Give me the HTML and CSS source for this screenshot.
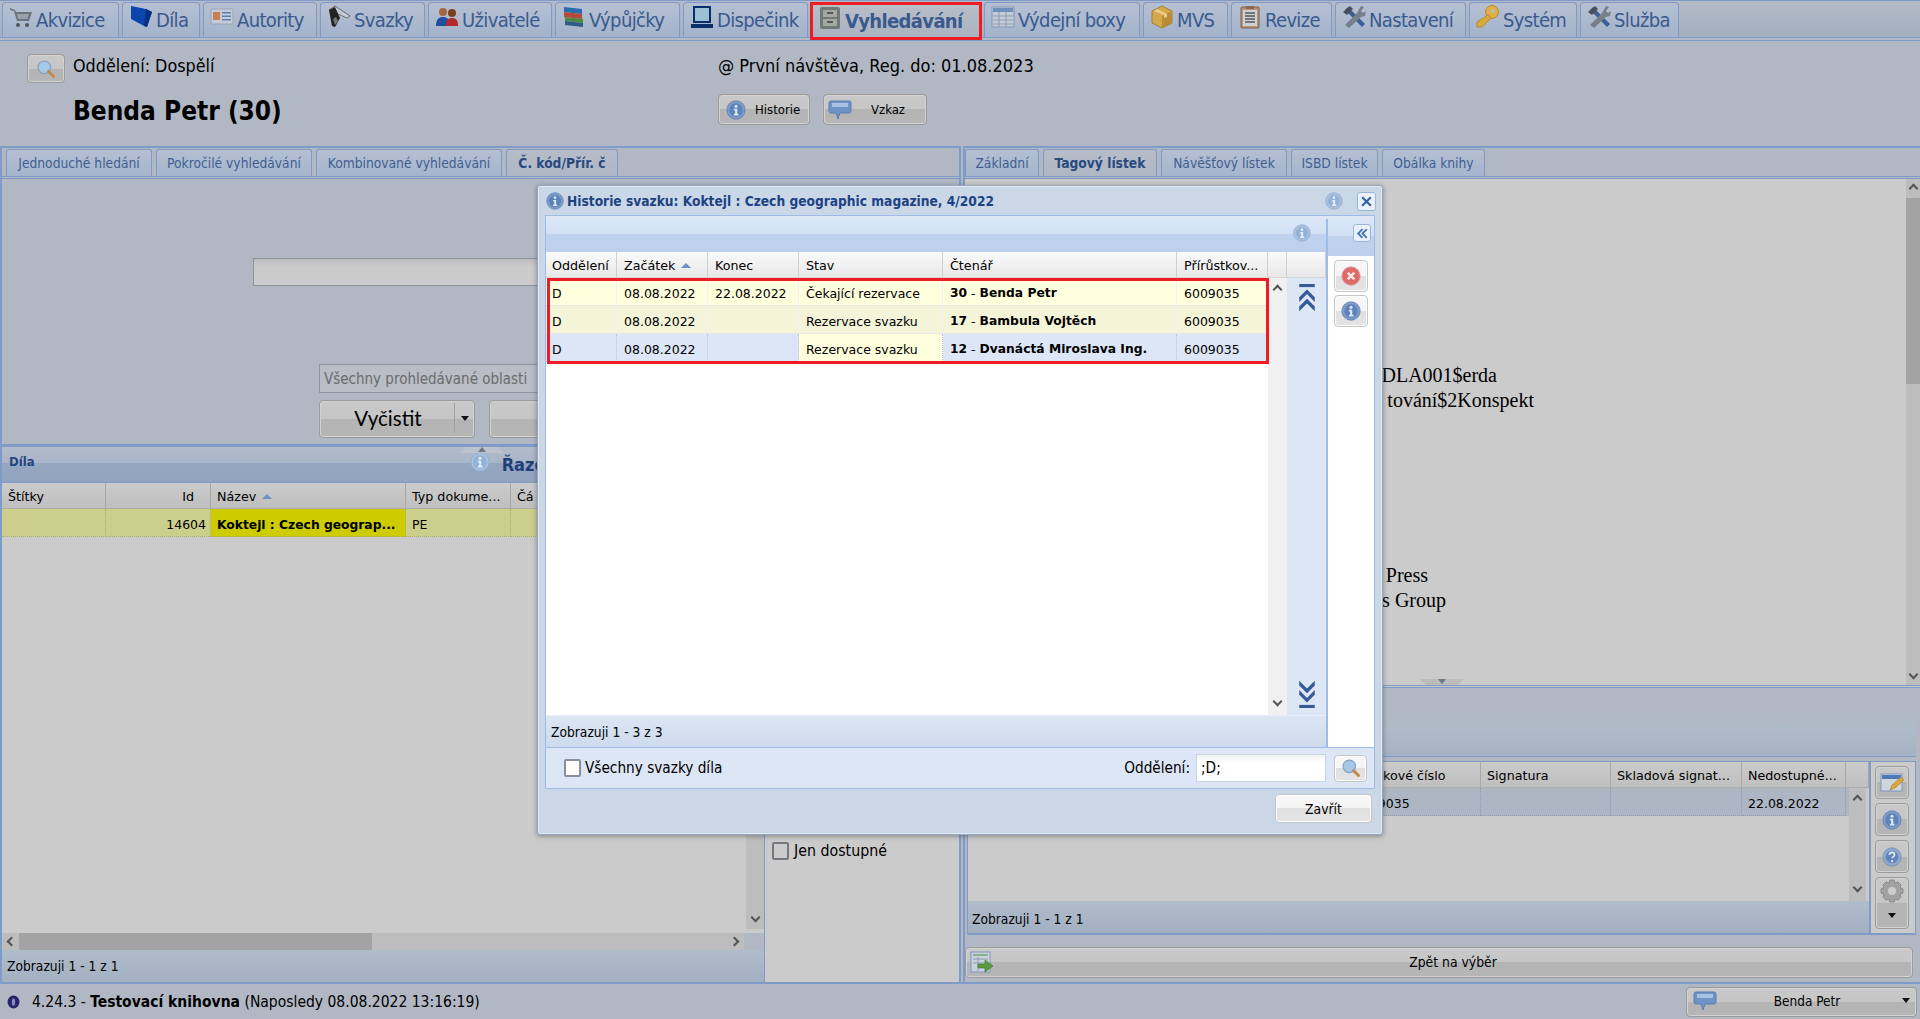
FILE: index.html
```html
<!DOCTYPE html>
<html lang="cs">
<head>
<meta charset="utf-8">
<title>Vyhledávání</title>
<link rel="stylesheet" href="styles.css">
</head>
<body>
<svg class="sprite" aria-hidden="true">
  <symbol id="i-info" viewBox="0 0 24 24"><circle cx="12" cy="12" r="11" fill="#7e9cc6" stroke="#5f82b4"/><circle cx="12" cy="12" r="8" fill="#5c83ba"/><circle cx="12" cy="7.5" r="1.8" fill="#dfe8f4"/><path d="M9.5 10.5h4v6h1.5v2H9.5v-2H11v-4H9.500z" fill="#dfe8f4"/></symbol>
  <symbol id="i-info-pale" viewBox="0 0 24 24"><circle cx="12" cy="12" r="11" fill="#a9c1dc" stroke="#8eaccf"/><circle cx="12" cy="12" r="8" fill="#93b2d5"/><circle cx="12" cy="7.500" r="1.800" fill="#e4edf7"/><path d="M9.500 10.500h4v6h1.500v2H9.500v-2H11v-4H9.500z" fill="#e4edf7"/></symbol>
  <symbol id="i-cart" viewBox="0 0 24 24"><path d="M1 3l5 2 1 2h16l-3 9H8L5 6 1 5z" fill="#6c737d"/><path d="M8 9h12l-1.500 5H9z" fill="#9aa1ab"/><circle cx="9" cy="20" r="2" fill="#555"/><circle cx="18" cy="20" r="2" fill="#555"/></symbol>
  <symbol id="i-book" viewBox="0 0 24 24"><path d="M2 1l15 3 6 3-5 15-3-1L2 14z" fill="#0c45ad"/><path d="M17 4l6 3-5 15-3-1z" fill="#06307f"/></symbol>
  <symbol id="i-card" viewBox="0 0 24 24"><rect x="1" y="4" width="22" height="15" rx="1" fill="#c4ccd8" stroke="#9aa4b3"/><rect x="3" y="7" width="7" height="8" fill="#c97d52"/><path d="M12 7h9v1.500h-9zM12 10.500h9V12h-9zM12 14h9v1.500h-9z" fill="#5d7fb0"/></symbol>
  <symbol id="i-pen" viewBox="0 0 24 24"><path d="M2 5L8 1l15 10-3 2z" fill="#c5cbd4" stroke="#555" stroke-width=".8"/><path d="M2 5l6-3 5 11-5 9-3-1z" fill="#222"/><path d="M6 14l3-2 2 4-3 4z" fill="#777"/></symbol>
  <symbol id="i-people" viewBox="0 0 24 24"><circle cx="8" cy="7" r="4" fill="#a5673a"/><circle cx="17" cy="8" r="4" fill="#7b3f1c"/><path d="M1 21c0-7 3-9 7-9s7 2 7 9z" fill="#1f4f9e"/><path d="M11 21c0-6 2-8 6-8s6 2 6 8z" fill="#b22a2a"/></symbol>
  <symbol id="i-books" viewBox="0 0 24 24"><path d="M2 2l18 2v5L2 7z" fill="#2b6bb0"/><path d="M2 7l18 2v5L2 12z" fill="#b44a3a"/><path d="M3 12l18 2v4L3 16z" fill="#4c8a43"/><path d="M3 16l18 2v4L3 20z" fill="#2d5d86"/></symbol>
  <symbol id="i-monitor" viewBox="0 0 24 24"><rect x="3" y="1" width="18" height="17" fill="#0a2e66"/><rect x="5" y="3" width="14" height="13" fill="#9cc1d5"/><rect x="1" y="19" width="22" height="4" fill="#0a2e66"/></symbol>
  <symbol id="i-cab" viewBox="0 0 24 24"><rect x="2" y="1" width="20" height="22" rx="2" fill="#6f7a76"/><rect x="5" y="4" width="14" height="7" fill="#a4aaa3"/><rect x="5" y="13" width="14" height="7" fill="#a4aaa3"/><rect x="9" y="6" width="6" height="2" fill="#555"/><rect x="9" y="15" width="6" height="2" fill="#555"/></symbol>
  <symbol id="i-grid" viewBox="0 0 24 24"><rect x="1" y="2" width="22" height="20" fill="#c4ccd8" stroke="#7f97bd"/><rect x="2" y="3" width="20" height="4" fill="#6f8fbd"/><path d="M2 11h20M2 15h20M2 19h20M8 7v15M15 7v15" stroke="#8f9bab"/></symbol>
  <symbol id="i-box" viewBox="0 0 24 24"><path d="M12 1l10 5v12l-10 5-10-5V6z" fill="#d4a94e" stroke="#a47f33"/><path d="M12 11l10-5v12l-10 5z" fill="#b88b34"/><path d="M7 4l10 5v3l-3 1V10L4 6z" fill="#ecd08c"/></symbol>
  <symbol id="i-clip" viewBox="0 0 24 24"><rect x="3" y="2" width="18" height="21" rx="1" fill="#b99478" stroke="#7f5f49"/><rect x="5" y="5" width="14" height="16" fill="#ccd1d8"/><path d="M7 8h10M7 11h10M7 14h10M7 17h10" stroke="#555" stroke-width="1.300"/><rect x="8" y="1" width="8" height="3" fill="#8a6a52"/></symbol>
  <symbol id="i-tools" viewBox="0 0 24 24"><path d="M3 5l3-3 17 17-3 3z" fill="#3a5f96"/><path d="M19 1l3 1-3 4 2 2 3-2-1 5-4 1L7 23l-4-3L15 8z" fill="#777f89"/><path d="M1 7l7-6 3 3-6 6z" fill="#4a4f57"/></symbol>
  <symbol id="i-key" viewBox="0 0 24 24"><circle cx="16" cy="7" r="6.500" fill="#deb04c" stroke="#b98a2c"/><circle cx="17" cy="6" r="1.800" fill="#b3bdcd"/><path d="M12 10l3 3L6 22H1v-5z" fill="#d9a93f" stroke="#b98a2c"/></symbol>
  <symbol id="i-lens" viewBox="0 0 24 24"><circle cx="10" cy="10" r="7.500" fill="#a8c8e8" stroke="#85a3c6" stroke-width="1.500"/><path d="M15 15l6 6" stroke="#c28a4c" stroke-width="3.500" stroke-linecap="round"/></symbol>
  <symbol id="i-bubble" viewBox="0 0 24 24"><path d="M3 3h18a2 2 0 012 2v8a2 2 0 01-2 2h-9l-2 6-2-6H3a2 2 0 01-2-2V5a2 2 0 012-2z" fill="#6f93c6" stroke="#5d7fb0"/><path d="M4 5h16v4H4z" fill="#a8c2e2"/></symbol>
  <symbol id="i-close" viewBox="0 0 24 24"><circle cx="12" cy="12" r="11" fill="#e06a6a" stroke="#d8a0a0"/><path d="M8 8l8 8M16 8l-8 8" stroke="#fbe4e4" stroke-width="3"/></symbol>
  <symbol id="i-help" viewBox="0 0 24 24"><circle cx="12" cy="12" r="11" fill="#8ea7cc" stroke="#7290bb"/><circle cx="12" cy="12" r="7.500" fill="#5f83ba"/><path d="M9 9.500a3 3 0 116 0c0 2-3 2-3 4" fill="none" stroke="#e4ecf6" stroke-width="2"/><circle cx="12" cy="17" r="1.300" fill="#e4ecf6"/></symbol>
  <symbol id="i-gear" viewBox="0 0 24 24"><path d="M10 1h4l1 3 3-1 3 3-1 3 3 1v4l-3 1 1 3-3 3-3-1-1 3h-4l-1-3-3 1-3-3 1-3-3-1v-4l3-1-1-3 3-3 3 1z" fill="#a2a2a2" stroke="#8a8a8a"/><circle cx="12" cy="12" r="4" fill="#cdcdcd"/></symbol>
  <symbol id="i-edit" viewBox="0 0 24 24"><rect x="1" y="3" width="21" height="17" fill="#cfd6df" stroke="#7f97bd"/><rect x="2" y="4" width="19" height="4" fill="#4f79b5"/><path d="M10 19l2-5 9-8 3 3-9 8z" fill="#dba53f" stroke="#a67a27" stroke-width=".6"/></symbol>
  <symbol id="i-export" viewBox="0 0 24 24"><rect x="1" y="1" width="19" height="20" fill="#c8d2e0" stroke="#7f97bd"/><path d="M3 4h15" stroke="#74a86a" stroke-width="1.500"/><path d="M3 8h15M3 12h15M8 6v14" stroke="#8f9bab"/><path d="M8 13h7V9l8 6-8 6v-4H8z" fill="#5b9a3f" stroke="#3d7428" stroke-width=".6"/></symbol>
  <symbol id="i-top" viewBox="0 0 24 36"><path d="M2 0h20v4H2z" fill="#355c98"/><path d="M12 7l10 10v6L12 13 2 23v-6z" fill="#355c98"/><path d="M12 19l10 10v6L12 25 2 35v-6z" fill="#355c98"/></symbol>
  <symbol id="i-bottom" viewBox="0 0 24 36"><path d="M2 36h20v-4H2z" fill="#355c98"/><path d="M12 29l10-10v-6L12 23 2 13v6z" fill="#355c98"/><path d="M12 17L22 7V1L12 11 2 1v6z" fill="#355c98"/></symbol>
  <symbol id="i-orb" viewBox="0 0 24 24"><ellipse cx="12" cy="12" rx="11" ry="12" fill="#25256a"/><ellipse cx="12" cy="12" rx="3" ry="7" fill="#8f8ac4"/></symbol>
</svg>

<nav class="topnav">
  <a class="tab"><svg class="tab-ico"><use href="#i-cart"/></svg>Akvizice</a>
  <a class="tab"><svg class="tab-ico"><use href="#i-book"/></svg>Díla</a>
  <a class="tab"><svg class="tab-ico"><use href="#i-card"/></svg>Autority</a>
  <a class="tab"><svg class="tab-ico"><use href="#i-pen"/></svg>Svazky</a>
  <a class="tab"><svg class="tab-ico"><use href="#i-people"/></svg>Uživatelé</a>
  <a class="tab"><svg class="tab-ico"><use href="#i-books"/></svg>Výpůjčky</a>
  <a class="tab"><svg class="tab-ico"><use href="#i-monitor"/></svg>Dispečink</a>
  <a class="tab tab-on"><svg class="tab-ico"><use href="#i-cab"/></svg>Vyhledávání</a>
  <a class="tab"><svg class="tab-ico"><use href="#i-grid"/></svg>Výdejní boxy</a>
  <a class="tab"><svg class="tab-ico"><use href="#i-box"/></svg>MVS</a>
  <a class="tab"><svg class="tab-ico"><use href="#i-clip"/></svg>Revize</a>
  <a class="tab"><svg class="tab-ico"><use href="#i-tools"/></svg>Nastavení</a>
  <a class="tab"><svg class="tab-ico"><use href="#i-key"/></svg>Systém</a>
  <a class="tab"><svg class="tab-ico"><use href="#i-tools"/></svg>Služba</a>
</nav>

<header class="user">
  <div class="user-left">
    <div class="user-dept">
      <button class="btn btn-lens"><svg class="ico-20"><use href="#i-lens"/></svg></button>
      <span class="user-dept-t">Oddělení: Dospělí</span>
    </div>
    <h1 class="user-name">Benda Petr (30)</h1>
  </div>
  <div class="user-right">
    <div class="user-visit">@ První návštěva, Reg. do: 01.08.2023</div>
    <div class="user-btns">
      <button class="btn btn-hist"><svg class="ico-20"><use href="#i-info"/></svg><span>Historie</span></button>
      <button class="btn btn-msg"><svg class="ico-24"><use href="#i-bubble"/></svg><span>Vzkaz</span></button>
    </div>
  </div>
</header>

<main class="work">
  <section class="col-left">
    <div class="subtabs subtabs-left">
      <a class="subtab">Jednoduché hledání</a>
      <a class="subtab">Pokročilé vyhledávání</a>
      <a class="subtab">Kombinované vyhledávání</a>
      <a class="subtab subtab-on">Č. kód/Přír. č</a>
    </div>
    <div class="search">
      <div class="field-wide"></div>
      <div class="field-area">Všechny prohledávané oblasti</div>
      <div class="search-btns">
        <button class="btn btn-big btn-clear"><span class="btn-clear-t">Vyčistit</span><span class="split"><i class="caret"></i></span></button>
        <button class="btn btn-big btn-next">Hledat</button>
      </div>
    </div>
    <div class="results">
      <div class="res-head">
        <span class="splitter"><i class="tri-up"></i></span>
        <span class="res-title">Díla</span>
        <svg class="res-info"><use href="#i-info-pale"/></svg>
        <span class="res-sort">Řazení</span>
      </div>
      <div class="res-body">
        <div class="res-main">
          <div class="res-grid">
            <div class="g-row g-head cols-works">
              <div class="g-c">Štítky</div><div class="g-c g-r">Id</div><div class="g-c">Název <i class="sort"></i></div><div class="g-c">Typ dokume...</div><div class="g-c">Čá</div>
            </div>
            <div class="g-row g-sel cols-works">
              <div class="g-c"></div><div class="g-c g-r">14604</div><div class="g-c g-hi">Koktejl : Czech geograp...</div><div class="g-c">PE</div><div class="g-c"></div>
            </div>
            <div class="vbar-end"><i class="chev chev-d"></i></div>
          </div>
          <div class="hbar"><i class="chev chev-l"></i><span class="hthumb"></span><i class="chev chev-r"></i></div>
          <div class="g-status">Zobrazuji 1 - 1 z 1</div>
        </div>
        <aside class="res-side">
          <label class="chk-row"><i class="chk chk-dim"></i>Jen dostupné</label>
        </aside>
      </div>
    </div>
  </section>

  <section class="col-right">
    <div class="subtabs subtabs-right">
      <a class="subtab">Základní</a>
      <a class="subtab subtab-on">Tagový lístek</a>
      <a class="subtab">Návěšťový lístek</a>
      <a class="subtab">ISBD lístek</a>
      <a class="subtab">Obálka knihy</a>
    </div>
    <div class="record">
      <div class="record-text">
        <p class="rec-a">DLA001$erda</p>
        <p class="rec-b">tování$2Konspekt</p>
        <p class="rec-c">Press</p>
        <p class="rec-d">s Group</p>
      </div>
      <div class="vscroll"><i class="chev chev-u"></i><span class="vthumb"></span><i class="chev chev-d vs-down"></i></div>
      <span class="splitter2"><i class="tri-down"></i></span>
    </div>
    <div class="copies-head"></div>
    <div class="copies">
      <div class="copies-main">
        <div class="copies-grid">
          <div class="g-row g-head cols-copies">
            <div class="g-c"></div><div class="g-c">Přírůstkové číslo</div><div class="g-c">Signatura</div><div class="g-c">Skladová signat...</div><div class="g-c">Nedostupné...</div><div class="g-c"></div>
          </div>
          <div class="g-row g-cur cols-copies">
            <div class="g-c"></div><div class="g-c">6009035</div><div class="g-c"></div><div class="g-c"></div><div class="g-c">22.08.2022</div>
          </div>
          <div class="copies-scroll"><i class="chev chev-u"></i><i class="chev chev-d"></i></div>
        </div>
        <div class="g-status copies-status">Zobrazuji 1 - 1 z 1</div>
      </div>
      <div class="copies-tools">
        <button class="btn tool"><svg class="ico-24"><use href="#i-edit"/></svg></button>
        <button class="btn tool"><svg class="ico-20"><use href="#i-info"/></svg></button>
        <button class="btn tool"><svg class="ico-20"><use href="#i-help"/></svg></button>
        <button class="btn tool tool-tall"><svg class="ico-24"><use href="#i-gear"/></svg><i class="caret"></i></button>
      </div>
    </div>
    <button class="btn btn-back"><svg class="ico-24 back-ico"><use href="#i-export"/></svg>Zpět na výběr</button>
  </section>
</main>

<footer class="statusbar">
  <svg class="orb"><use href="#i-orb"/></svg>
  <span class="ver">4.24.3 - <b>Testovací knihovna</b> (Naposledy 08.08.2022 13:16:19)</span>
  <button class="btn btn-user"><svg class="ico-24"><use href="#i-bubble"/></svg><span class="btn-user-t">Benda Petr</span><i class="caret"></i></button>
</footer>

<div class="modal">
  <div class="m-title">
    <svg class="ico-18"><use href="#i-info"/></svg>
    <span class="m-title-t">Historie svazku: Koktejl : Czech geographic magazine, 4/2022</span>
    <svg class="ico-18 m-title-info"><use href="#i-info-pale"/></svg>
    <button class="m-x"><svg viewBox="0 0 12 12"><path d="M2 2l8 8M10 2l-8 8" stroke="#36609f" stroke-width="2"/></svg></button>
  </div>
  <div class="m-frame">
    <div class="m-body">
      <div class="m-main">
        <div class="m-strip"><svg class="ico-18"><use href="#i-info-pale"/></svg></div>
        <div class="m-gridwrap">
          <div class="m-grid">
            <div class="g-row g-mhead cols-hist">
              <div class="g-c">Oddělení</div><div class="g-c">Začátek <i class="sort"></i></div><div class="g-c">Konec</div><div class="g-c">Stav</div><div class="g-c">Čtenář</div><div class="g-c">Přírůstkov...</div><div class="g-c"></div><div class="g-c"></div>
            </div>
            <div class="m-rows">
              <div class="m-table">
                <div class="g-row m-row m-row1 cols-data">
                  <div class="g-c">D</div><div class="g-c">08.08.2022</div><div class="g-c">22.08.2022</div><div class="g-c">Čekající rezervace</div><div class="g-c"><b>30</b> - <b>Benda Petr</b></div><div class="g-c">6009035</div>
                </div>
                <div class="g-row m-row m-row2 cols-data">
                  <div class="g-c">D</div><div class="g-c">08.08.2022</div><div class="g-c"></div><div class="g-c">Rezervace svazku</div><div class="g-c"><b>17</b> - <b>Bambula Vojtěch</b></div><div class="g-c">6009035</div>
                </div>
                <div class="g-row m-row m-row3 cols-data">
                  <div class="g-c">D</div><div class="g-c">08.08.2022</div><div class="g-c"></div><div class="g-c g-y">Rezervace svazku</div><div class="g-c"><b>12</b> - <b>Dvanáctá Miroslava Ing.</b></div><div class="g-c">6009035</div>
                </div>
                <div class="m-redbox"></div>
              </div>
              <div class="m-scroll"><i class="chev chev-u"></i><i class="chev chev-d"></i></div>
              <div class="m-jump"><svg class="jump"><use href="#i-top"/></svg><svg class="jump"><use href="#i-bottom"/></svg></div>
            </div>
          </div>
          <div class="m-status">Zobrazuji 1 - 3 z 3</div>
        </div>
      </div>
      <aside class="m-side">
        <div class="m-side-head"><button class="m-collapse"><svg viewBox="0 0 12 12"><path d="M6 2L2 6l4 4M10 2L6 6l4 4" fill="none" stroke="#4d78b5" stroke-width="1.800"/></svg></button></div>
        <div class="m-side-btns">
          <button class="btn-l m-tool"><svg class="ico-20"><use href="#i-close"/></svg></button>
          <button class="btn-l m-tool"><svg class="ico-20"><use href="#i-info"/></svg></button>
        </div>
      </aside>
    </div>
    <div class="m-form">
      <label class="chk-row m-chk"><i class="chk"></i>Všechny svazky díla</label>
      <span class="m-dept">Oddělení:</span>
      <div class="m-input">;D;</div>
      <button class="btn-l m-lens"><svg class="ico-20"><use href="#i-lens"/></svg></button>
    </div>
  </div>
  <div class="m-foot"><button class="btn-l m-close">Zavřít</button></div>
</div>
</body>
</html>
```

FILE: styles.css
```css
* { box-sizing: border-box; }
html, body { margin: 0; padding: 0; }
body {
  position: relative;
  width: 1920px;
  height: 1019px;
  overflow: hidden;
  display: flex;
  flex-direction: column;
  background: #b1b8c4;
  color: #000;
  font-family: "DejaVu Sans Condensed", "DejaVu Sans", sans-serif;
}
.sprite { position: absolute; width: 0; height: 0; overflow: hidden; }
button { font-family: inherit; padding: 0; cursor: default; }
h1, p { margin: 0; }
i { font-style: normal; }

.ico-18 { width: 18px; height: 18px; flex: none; }
.ico-20 { width: 20px; height: 20px; flex: none; }
.ico-24 { width: 24px; height: 24px; flex: none; }

/* buttons */
.btn {
  border: 1px solid #9b9b9b;
  border-radius: 4px;
  background: linear-gradient(#c9c9c9 0, #c6c6c6 50%, #b4b4b4 50%, #b6b6b6 100%);
  box-shadow: inset 0 0 0 1px #d2d2d2;
  color: #000;
  display: flex;
  align-items: center;
}
.btn-l {
  border: 1px solid #c6c6c6;
  border-radius: 4px;
  background: linear-gradient(#f8f8f8 0, #f4f4f4 50%, #e0e0e0 50%, #e4e4e4 100%);
  box-shadow: inset 0 0 0 1px #fdfdfd;
  color: #000;
  display: flex;
  align-items: center;
  justify-content: center;
}
.caret { display: block; width: 0; height: 0; border: 4px solid transparent; border-top: 5px solid #111; border-bottom: 0; }

/* top navigation */
.topnav {
  height: 41px;
  flex: none;
  padding: 1px 0 0 2px;
  display: grid;
  grid-template-columns: 120px 81px 117px 108px 127px 128px 128px 173px 159px 88px 104px 134px 111px 102px;
  align-items: start;
  border-top: 1px solid #7f9bc7;
  border-bottom: 4px double #7f9bc7;
  background: linear-gradient(#b4bac6, #a4afc0);
}
.tab {
  height: 35px;
  margin-right: 3px;
  padding-left: 6px;
  display: flex;
  align-items: center;
  gap: 3px;
  border: 1px solid #7f9bc7;
  border-bottom: 0;
  border-radius: 4px 4px 0 0;
  background: linear-gradient(#b6c0d2, #a3b3cb);
  color: #3a5a8e;
  font-size: 20px;
  white-space: nowrap;
  letter-spacing: -.65px;
}
.tab-ico { width: 24px; height: 24px; flex: none; margin-top: -6px; }
.tab-on {
  font-weight: 700;
  margin: 0 2px 0 -1px;
  padding-left: 5px;
  height: 38px;
  border: 3px solid #ee1c25;
  border-radius: 0;
  background: linear-gradient(#b9bec7, #aab2c2);
  z-index: 1;
}

/* user panel */
.user { height: 105px; flex: none; display: flex; }
.user-left { width: 718px; flex: none; }
.user-dept { display: flex; align-items: center; gap: 8px; padding: 13px 0 0 27px; font-size: 17.800px; }
.user-dept-t { margin-top: -6px; }
.btn-lens { width: 38px; height: 29px; justify-content: center; }
.user-name { margin: 10px 0 0 73px; font-size: 26px; font-weight: 700; line-height: 36px; }
.user-visit { padding-top: 14px; font-size: 18px; line-height: 22px; }
.user-btns { display: flex; gap: 13px; margin-top: 17px; }
.btn-hist { width: 92px; height: 31px; padding-left: 7px; gap: 9px; font-size: 13px; }
.btn-msg { width: 104px; height: 31px; padding-left: 4px; gap: 19px; font-size: 13px; }

/* workspace */
.work { flex: 1; min-height: 0; display: flex; height: 836px; }
.col-left { width: 961px; flex: none; display: flex; flex-direction: column; border-left: 2px solid #7f9bc7; border-right: 2px solid #7f9bc7; }
.col-right { flex: 1; min-width: 0; margin-left: 2px; display: flex; flex-direction: column; border-left: 2px solid #7f9bc7; }

.subtabs {
  height: 33px;
  flex: none;
  padding-top: 1px;
  display: grid;
  align-items: start;
  border-top: 2px solid #7f9bc7;
  border-bottom: 3px double #7f9bc7;
}
.subtabs-left { grid-template-columns: 150px 160px 190px 116px; padding-left: 4px; }
.subtabs-right { grid-template-columns: 78px 118px 130px 91px 107px; padding-left: 0; }
.subtab {
  height: 27px;
  margin-right: 4px;
  display: flex;
  align-items: center;
  justify-content: center;
  border: 1px solid #7f9bc7;
  border-bottom: 0;
  border-radius: 3px 3px 0 0;
  background: linear-gradient(#b4bfd1, #a5b5cc);
  color: #3f5f93;
  font-size: 13.700px;
  white-space: nowrap;
}
.subtab-on { font-weight: 700; color: #274a80; background: linear-gradient(#b6bcc8, #b0b7c4); }

/* search */
.search { height: 268px; flex: none; padding: 79px 0 0 251px; border-bottom: 3px solid #7f9bc7; }
.field-wide { width: 460px; height: 28px; border: 1px solid #8d94a1; background: linear-gradient(#bdbdbd, #cbcbcb 30%); }
.field-area { width: 340px; height: 29px; margin: 78px 0 0 66px; padding-left: 4px; border: 1px solid #8d94a1; background: #b8bdc6; color: #6c6c6c; font-size: 15px; line-height: 29px; white-space: nowrap; }
.search-btns { display: flex; gap: 14px; margin: 7px 0 0 66px; }
.btn-big { height: 38px; font-family: Lato, sans-serif; font-size: 20.500px; padding-bottom: 2px; }
.btn-clear { width: 156px; }
.btn-clear-t { flex: 1; text-align: center; padding-left: 2px; }
.split { width: 20px; height: 30px; display: flex; align-items: center; justify-content: center; border-left: 1px solid #a2a2a2; }
.btn-next { width: 160px; justify-content: center; }

/* results */
.results { flex: 1; min-height: 0; display: flex; flex-direction: column; position: relative; }
.res-head { height: 36px; flex: none; display: flex; align-items: center; padding-left: 7px; background: linear-gradient(#b1bbcb 0, #a9b5c8 45%, #95a6c0 46%, #92a4bf 100%); border-bottom: 1px solid #7f9bc7; position: relative; }
.res-title { font-size: 13px; font-weight: 700; color: #24477f; margin-top: -7px; }
.res-info { width: 20px; height: 20px; margin-left: 435px; margin-top: -6px; }
.res-sort { margin-left: 12px; font-size: 18px; font-weight: 700; color: #1f3f7a; }
.splitter { position: absolute; left: 458px; top: 0; width: 44px; height: 6px; background: #bcc3ce; clip-path: polygon(6px 0, 38px 0, 44px 100%, 0 100%); display: flex; justify-content: center; }
.tri-up { width: 0; height: 0; border: 4px solid transparent; border-bottom: 5px solid #6c7787; border-top: 0; }
.res-body { flex: 1; min-height: 0; display: flex; }
.res-main { width: 763px; flex: none; display: flex; flex-direction: column; border-right: 1px solid #7f9bc7; }
.res-grid { flex: 1; min-height: 0; position: relative; background: #cbcbcb; }
.g-row { display: grid; font-size: 13px; }
.g-c { display: flex; align-items: center; padding: 0 6px; white-space: pre; overflow: hidden; }
.g-r { justify-content: flex-end; }
.g-head { height: 26px; padding-top: 0; background: linear-gradient(#cbcbcb, #bfbfbf); border-bottom: 1px solid #acacac; font-family: "DejaVu Sans", sans-serif; font-size: 12.700px; }
.g-head .g-c { border-right: 1px solid #a8a8a8; padding-top: 2px; }
.g-head .g-r { padding-right: 16px; }
.cols-works { grid-template-columns: 104px 105px 195px 105px 1fr; }
.g-sel { height: 28px; background: #cccf8c; font-family: "DejaVu Sans", sans-serif; font-size: 12.500px; }
.g-sel .g-c { border-right: 1px dotted #a8a97a; border-bottom: 1px dotted #a8a97a; padding-top: 4px; }
.g-sel .g-r { padding-right: 4px; }
.g-hi { background: #cccc00; font-weight: 700; font-size: 12.300px; }
.sort { display: inline-block; width: 0; height: 0; border: 5px solid transparent; border-bottom: 5px solid #6b92c4; border-top: 0; margin-left: 2px; }
.vbar-end { position: absolute; right: 0; top: 54px; bottom: 4px; width: 18px; background: #bdbdbd; display: flex; align-items: flex-end; justify-content: center; padding-bottom: 8px; }
.chev { display: block; width: 7px; height: 7px; border: 0 solid #555; }
.chev-u { border-width: 2px 0 0 2px; transform: rotate(45deg); }
.chev-d { border-width: 0 2px 2px 0; transform: rotate(45deg); }
.chev-l { border-width: 0 0 2px 2px; transform: rotate(45deg); }
.chev-r { border-width: 2px 2px 0 0; transform: rotate(45deg); }
.hbar { height: 17px; flex: none; margin-right: 20px; display: flex; align-items: center; background: #bdbdbd; position: relative; padding: 0 6px; justify-content: space-between; }
.hthumb { position: absolute; left: 17px; top: 0; width: 353px; height: 17px; background: #a3a3a3; }
.g-status { height: 32px; flex: none; display: flex; align-items: center; padding-left: 5px; font-size: 13.700px; background: linear-gradient(#b1bccb, #a2b0c2); }
.res-side { flex: 1; background: #cbcbcb; padding: 358px 0 0 7px; }
.res-side .chk-row { gap: 5px; font-size: 15.800px; }
.chk-row { display: flex; align-items: center; gap: 4px; font-size: 15.200px; }
.chk { width: 17px; height: 18px; border: 2px solid #8c8c9a; border-radius: 2px; background: #fff; flex: none; }
.chk-dim { background: #cbcbcb; border-color: #77777f; }

/* right column */
.record { height: 509px; flex: none; position: relative; background: #cbcbcb; border-bottom: 3px double #7f9bc7; display: flex; justify-content: flex-end; }
.record-text { flex: 1; font-family: "Liberation Serif", serif; font-size: 20px; line-height: 25px; position: relative; padding-top: 184px; }
.record-text p { text-align: right; white-space: nowrap; }
.rec-a { width: 532px; }
.rec-b { width: 569px; }
.rec-c { width: 463px; margin-top: 150px; }
.rec-d { width: 481px; }
.vscroll { width: 14px; flex: none; background: #bdbdbd; display: flex; flex-direction: column; align-items: center; position: relative; padding-top: 6px; }
.vthumb { position: absolute; top: 19px; left: 0; width: 14px; height: 186px; background: #a3a3a3; }
.vs-down { position: absolute; bottom: 7px; }
.splitter2 { position: absolute; left: 455px; bottom: 0; width: 44px; height: 6px; background: #bcbcbc; clip-path: polygon(0 0, 44px 0, 38px 100%, 6px 100%); display: flex; justify-content: center; }
.tri-down { width: 0; height: 0; border: 4px solid transparent; border-top: 5px solid #6c7787; border-bottom: 0; }
.copies-head { height: 69px; flex: none; margin-right: 4px; border-bottom: 1px solid #7f9bc7; background: linear-gradient(#b1b8c4 0, #b1b8c4 40%, #aebcc8 60%, #a5b2c4 100%); }
.copies { height: 174px; flex: none; margin: 4px 4px 0 2px; display: flex; border: 1px solid #7f9bc7; border-bottom: 2px solid #7f9bc7; }
.copies-main { flex: 1; min-width: 0; display: flex; flex-direction: column; }
.copies-grid { flex: 1; min-height: 0; background: #cbcbcb; position: relative; }
.cols-copies { grid-template-columns: 368px 145px 130px 131px 104px 1fr; }
.g-cur { height: 28px; margin-right: 20px; grid-template-columns: 368px 145px 130px 131px 104px; background: #aeb6c4; font-family: "DejaVu Sans", sans-serif; font-size: 12.500px; }
.g-cur .g-c { border-right: 1px dotted #8d9ab0; border-bottom: 1px dotted #8d9ab0; padding-top: 3px; }
.g-cur .g-c:nth-child(2) { padding-left: 18px; }
.copies-scroll { position: absolute; right: 3px; top: 26px; bottom: 0; width: 17px; background: #bdbdbd; display: flex; flex-direction: column; align-items: center; justify-content: space-between; padding: 8px 0 10px; }
.copies-status { height: 32px; padding: 3px 0 0 4px; }
.copies-tools { width: 46px; flex: none; display: flex; flex-direction: column; gap: 4px; padding: 4px 0 0 4px; background: #cbcbcb; border-left: 2px solid #7f9bc7; }
.tool { width: 34px; height: 33px; justify-content: center; }
.tool-tall { height: 52px; flex-direction: column; justify-content: flex-start; gap: 10px; padding-top: 1px; }
.btn-back { height: 31px; flex: none; margin: 12px 0 0 0; padding: 0 0 2px 28px; position: relative; justify-content: center; font-size: 13.800px; width: 948px; }
.back-ico { position: absolute; left: 4px; top: 3px; }

/* status bar */
.statusbar { height: 37px; flex: none; position: relative; display: flex; align-items: center; padding-left: 7px; border-top: 2px solid #7f9bc7; font-size: 15.500px; }
.orb { width: 13px; height: 14px; }
.ver { margin-left: 12px; flex: 1; }
.ver b { font-weight: 700; }
.btn-user { width: 231px; height: 30px; margin-right: 3px; padding: 0 6px 2px; font-size: 13.500px; }
.btn-user-t { flex: 1; text-align: center; padding-left: 7px; padding-right: 12px; }

/* modal */
.modal {
  position: absolute;
  left: 537px;
  top: 185px;
  width: 846px;
  height: 650px;
  display: flex;
  flex-direction: column;
  background: #cad7e7;
  border: 1px solid #97a9c4;
  border-radius: 3px;
  box-shadow: 0 1px 5px rgba(60, 60, 60, .55), inset 0 0 0 1px #dfe8f3;
}
.m-title { height: 29px; flex: none; display: flex; align-items: center; padding: 1px 6px 0 8px; }
.m-title-t { margin-left: 3px; flex: 1; color: #1d4384; font-size: 13.650px; font-weight: 700; white-space: nowrap; }
.m-title-info { margin-right: 14px; }
.m-x { width: 19px; height: 19px; border: 1px solid #9ab5da; border-radius: 3px; background: #eaf1fb; display: flex; align-items: center; justify-content: center; }
.m-x svg { width: 13px; height: 13px; }
.m-frame { flex: none; margin: 0 7px; border: 1px solid #9dbce6; background: #dde6f5; }
.m-body { height: 532px; display: flex; border-bottom: 1px solid #9dbce6; padding-top: 3px; }
.m-main { width: 782px; flex: none; display: flex; flex-direction: column; border-right: 2px solid #9dbce6; }
.m-strip { height: 33px; flex: none; display: flex; align-items: center; justify-content: flex-end; padding: 0 15px 5px 0; background: linear-gradient(#dbe7f7 0, #d1e0f4 45%, #bfd2ed 46%, #bcd0ec 100%); }
.m-gridwrap { flex: 1; min-height: 0; display: flex; flex-direction: column; }
.m-grid { flex: 1; min-height: 0; display: flex; flex-direction: column; background: #fff; }
.g-mhead { height: 26px; flex: none; background: linear-gradient(#fafafa, #e8e8e8); font-family: "DejaVu Sans", sans-serif; font-size: 12.700px; border-bottom: 1px solid #d6d6d6; }
.g-mhead .g-c { border-right: 1px solid #d0d0d0; padding: 2px 0 0 7px; }
.g-mhead .g-c:first-child { padding-left: 6px; }
.cols-hist { grid-template-columns: 71px 91px 91px 144px 234px 91px 19px 1fr; }
.cols-data { grid-template-columns: 71px 91px 91px 144px 234px 91px; }
.m-rows { flex: 1; min-height: 0; display: flex; }
.m-table { width: 722px; flex: none; position: relative; }
.m-row { height: 28px; font-family: "DejaVu Sans", sans-serif; font-size: 12.500px; }
.m-row .g-c { border-right: 1px solid #f2f2f2; border-bottom: 1px solid #e6e6e6; padding: 3px 0 0 7px; }
.m-row .g-c:first-child { padding-left: 6px; }
.m-row b { font-weight: 700; font-size: 12.300px; }
.m-row1 { background: #ffffde; }
.m-row2 { background: #f3f4d8; }
.m-row3 { background: #dde6f6; }
.m-row3 .g-c { border-right: 1px dotted #b6c6e2; border-bottom: 1px dotted #b6c6e2; }
.m-row .g-y { background: #ffffde; }
.m-redbox { position: absolute; left: 1px; top: 0; width: 722px; height: 86px; border: 3px solid #ee1c25; }
.m-scroll { width: 19px; flex: none; background: #f0f0f0; display: flex; flex-direction: column; align-items: center; justify-content: space-between; padding: 8px 0 10px; }
.m-jump { flex: 1; background: #dde6f5; display: flex; flex-direction: column; align-items: center; justify-content: space-between; padding: 6px 0 7px; }
.jump { width: 20px; height: 28px; }
.m-status { height: 32px; flex: none; display: flex; align-items: center; padding-left: 5px; font-size: 13.700px; background: linear-gradient(#dce6f4, #cddbee); border-top: 1px solid #e8eef7; }
.m-side { flex: 1; display: flex; flex-direction: column; background: #fff; }
.m-side-head { height: 37px; flex: none; display: flex; justify-content: flex-end; padding: 5px 3px 0 0; background: linear-gradient(#dbe7f7 0, #d1e0f4 45%, #bfd2ed 46%, #bcd0ec 100%); }
.m-collapse { width: 18px; height: 18px; border: 1px solid #9ab5da; border-radius: 3px; background: #eaf1fb; display: flex; align-items: center; justify-content: center; }
.m-collapse svg { width: 13px; height: 13px; }
.m-side-btns { display: flex; flex-direction: column; gap: 3px; padding: 4px 0 0 6px; }
.m-tool { width: 34px; height: 32px; }
.m-form { height: 40px; display: flex; align-items: center; padding-left: 18px; }
.m-chk { flex: 1; font-size: 15.200px; }
.m-dept { font-size: 15.200px; margin-right: 6px; }
.m-input { width: 130px; height: 28px; padding-left: 4px; border: 1px solid #c6d3e6; background: linear-gradient(#f2f2f2, #fff 30%); font-size: 15.200px; line-height: 26px; }
.m-lens { width: 33px; height: 27px; margin: 0 7px 0 8px; }
.m-foot { flex: 1; display: flex; justify-content: flex-end; padding: 5px 10px 0 0; }
.m-close { width: 97px; height: 29px; font-size: 13.800px; }
```
